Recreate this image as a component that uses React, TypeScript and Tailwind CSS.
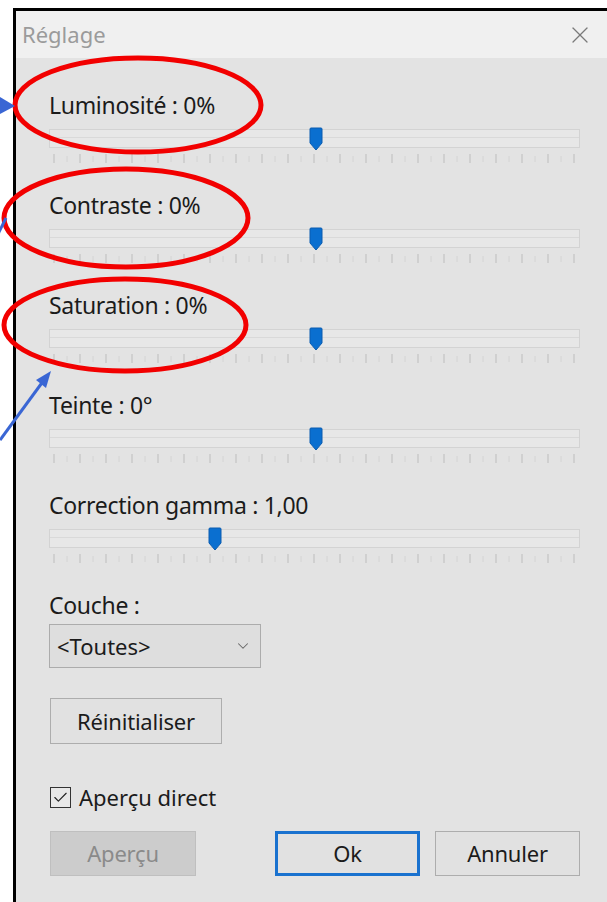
import { Check, ChevronDown, X } from 'lucide-react'

const FONT = { fontFamily: '"Noto Sans", "Liberation Sans", sans-serif' }

const TICKS = Array.from({ length: 21 }, (_, i) => i)

function Slider({ label, pos }: { label: string; pos: number }) {
  return (
    <div className="flex flex-col">
      <div className="h-[25px] leading-[25px] text-[23px] tracking-[-0.3px] text-[#1b1b1b]">{label}</div>
      <div className="relative mt-[11px] h-[19px] w-[531px] border border-[#d3d3d3] bg-[#e7e7e7]">
        <div className="absolute left-0 right-0 top-[7px] h-px bg-[#d9d9d9]" />
        {/* thumb */}
        <svg
          className="absolute top-[-3px]"
          style={{ left: pos - 7 }}
          width="14"
          height="24"
          viewBox="0 0 14 24"
        >
          <path d="M2 1 H12 Q13 1 13 2 V16 L7 23 L1 16 V2 Q1 1 2 1 Z" fill="#0a6fd0" stroke="#0a5cb0" strokeWidth="1" />
        </svg>
      </div>
      <svg className="mt-[4px]" width="531" height="13">
        {TICKS.map((i) => {
          const x = 5 + i * 26
          return <line key={i} x1={x} y1={2} x2={x} y2={11} stroke="#bdbdbd" strokeWidth="1" />
        })}
        {TICKS.slice(0, 20).map((i) => {
          const x = 5 + i * 26 + 13
          return <line key={i} x1={x} y1={4} x2={x} y2={10} stroke="#d4d4d4" strokeWidth="1" />
        })}
      </svg>
    </div>
  )
}

const BUTTON_STYLES = {
  normal: 'border border-[#adadad] bg-[#e1e1e1] text-[#1b1b1b]',
  default: 'border-[3px] border-[#1a72cf] bg-[#e1e1e1] text-[#1b1b1b]',
  disabled: 'border border-[#bfbfbf] bg-[#cccccc] text-[#8a8a8a]',
}

function Button({
  children,
  variant = 'normal',
  className = '',
}: {
  children: React.ReactNode
  variant?: keyof typeof BUTTON_STYLES
  className?: string
}) {
  return (
    <div
      className={`flex items-center justify-center text-[22px] tracking-[-0.2px] ${BUTTON_STYLES[variant]} ${className}`}
    >
      {children}
    </div>
  )
}

export default function App() {
  return (
    <div className="relative h-[902px] w-[607px] overflow-hidden bg-white" style={FONT}>
      {/* dialog window */}
      <div className="ml-[13px] mt-[8px] flex h-[894px] flex-col border-l-[3px] border-t-[3px] border-black bg-[#e3e3e3]">
        <div className="flex h-[47px] items-center justify-between bg-[#f0f0f0] pl-[6px] pr-[13px]">
          <span className="text-[22px] text-[#9b9b9b]">Réglage</span>
          <X className="h-[28px] w-[28px] text-[#7a7a7a]" strokeWidth={1.1} />
        </div>

        <div className="flex flex-col pl-[33px] pt-[35px]">
          <div className="flex flex-col gap-[28px]">
            <Slider label="Luminosité : 0%" pos={266} />
            <Slider label="Contraste : 0%" pos={266} />
            <Slider label="Saturation : 0%" pos={266} />
            <Slider label="Teinte : 0°" pos={266} />
            <Slider label="Correction gamma : 1,00" pos={165} />
          </div>

          <div className="mt-[28px] h-[25px] leading-[25px] text-[23px] tracking-[-0.3px] text-[#1b1b1b]">Couche :</div>
          <div className="mt-[6px] flex h-[44px] w-[212px] items-center justify-between border border-[#acacac] bg-[#dedede] pl-[7px] pr-[8px] text-[22px] text-[#1b1b1b]">
            <span>&lt;Toutes&gt;</span>
            <ChevronDown className="h-[18px] w-[18px] text-[#666]" strokeWidth={1.4} />
          </div>

          <Button className="ml-px mt-[30px] h-[46px] w-[172px]">Réinitialiser</Button>

          <div className="ml-px mt-[40px] flex h-[26px] items-center gap-[8px] text-[22px] text-[#1b1b1b]">
            <div className="flex h-[21px] w-[21px] items-center justify-center border border-[#333] bg-[#e8e8e8]">
              <Check className="h-[17px] w-[17px] text-[#222]" strokeWidth={1.6} />
            </div>
            <span>Aperçu direct</span>
          </div>

          <div className="ml-px mt-[21px] flex items-center">
            <Button variant="disabled" className="h-[45px] w-[146px]">Aperçu</Button>
            <Button variant="default" className="ml-[79px] h-[45px] w-[145px]">Ok</Button>
            <Button className="ml-[15px] h-[45px] w-[145px]">Annuler</Button>
          </div>
        </div>
      </div>

      {/* annotations */}
      <svg className="pointer-events-none absolute inset-0" width="607" height="902">
        <ellipse cx="138" cy="105" rx="123" ry="47" fill="none" stroke="#f20000" strokeWidth="5" />
        <ellipse cx="126" cy="218" rx="122" ry="49" fill="none" stroke="#f20000" strokeWidth="5" />
        <ellipse cx="125" cy="325" rx="121" ry="46" fill="none" stroke="#f20000" strokeWidth="5" />
        <polygon points="0,97 15,106 0,114" fill="#3a66d4" />
        <line x1="-4" y1="238" x2="6" y2="218" stroke="#3a66d4" strokeWidth="3" />
        <line x1="0" y1="440" x2="44" y2="380" stroke="#3a66d4" strokeWidth="3" />
        <polygon points="51,371 46,388 36,380" fill="#3a66d4" />
      </svg>
    </div>
  )
}
